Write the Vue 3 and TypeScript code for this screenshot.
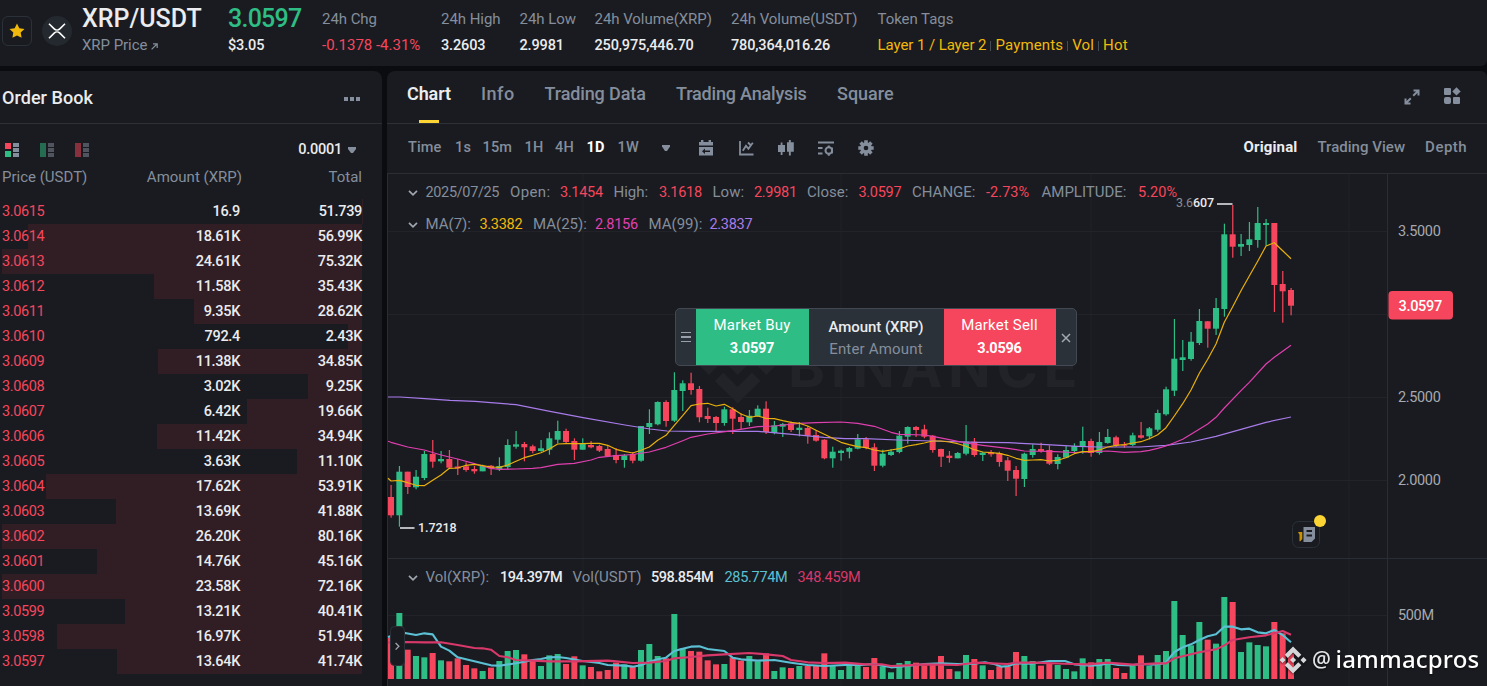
<script setup lang="ts">
interface Order { price: string; amount: string; total: string }
interface Candle { x: number; up: boolean; high: number; top: number; bottom: number; low: number }

const stats = [
  { label: '24h Chg', value: '-0.1378 -4.31%', tone: 'down' },
  { label: '24h High', value: '3.2603', tone: 'plain' },
  { label: '24h Low', value: '2.9981', tone: 'plain' },
  { label: '24h Volume(XRP)', value: '250,975,446.70', tone: 'plain' },
  { label: '24h Volume(USDT)', value: '780,364,016.26', tone: 'plain' },
]
const tags = ['Layer 1 / Layer 2', 'Payments', 'Vol', 'Hot']

const orders: Order[] = [
  ['3.0615', '16.9', '51.739'], ['3.0614', '18.61K', '56.99K'], ['3.0613', '24.61K', '75.32K'],
  ['3.0612', '11.58K', '35.43K'], ['3.0611', '9.35K', '28.62K'], ['3.0610', '792.4', '2.43K'],
  ['3.0609', '11.38K', '34.85K'], ['3.0608', '3.02K', '9.25K'], ['3.0607', '6.42K', '19.66K'],
  ['3.0606', '11.42K', '34.94K'], ['3.0605', '3.63K', '11.10K'], ['3.0604', '17.62K', '53.91K'],
  ['3.0603', '13.69K', '41.88K'], ['3.0602', '26.20K', '80.16K'], ['3.0601', '14.76K', '45.16K'],
  ['3.0600', '23.58K', '72.16K'], ['3.0599', '13.21K', '40.41K'], ['3.0598', '16.97K', '51.94K'],
  ['3.0597', '13.64K', '41.74K'],
].map(([price, amount, total]) => ({ price, amount, total }))

/** Depth bar width in percent; a full bar stands for 61.35K. */
function depth(total: string): number {
  const value = parseFloat(total) * (total.endsWith('K') ? 1 : 0.001)
  return Math.min(100, (value / 61.35) * 100)
}

const tabs = ['Chart', 'Info', 'Trading Data', 'Trading Analysis', 'Square']
const intervals = ['Time', '1s', '15m', '1H', '4H', '1D', '1W']

const quote = [
  ['Open:', '3.1454'], ['High:', '3.1618'], ['Low:', '2.9981'], ['Close:', '3.0597'],
  ['CHANGE:', '-2.73%'], ['AMPLITUDE:', '5.20%'],
]

const STEP = 25 / 3
const FIRST = 391
const at = (i: number) => FIRST + i * STEP

// One record per day: direction, then y of high, body top, body bottom and low.
const candleData = `
r485,497,515.3,517.7 g466,471.7,515.3,526.7 r471.7,471.7,487,494 g470,476.7,487.3,489.3 g451,454,478,480
r440,454,461.7,467.7 g451,459,461.3,463.3 r450,459,467.7,467.7 r459,466.5,468.5,475 r462.3,466.3,470,471.7
r466,469,471.3,473.7 g464.7,466,471.3,471.3 r465,465.7,468.3,475 g457.3,466,469,471 g439.3,445,467,469.3
g431,444.3,446.7,448.7 r442,444,447.3,461.3 r444.7,446.3,451,453.3 g440,448.3,451,451.7 g432.3,438.3,449.7,454.7
g420.7,431,439.7,443.3 r428.7,431,442,443.3 r438.3,441,449.7,460 g438.3,444,449.7,449.7 r441,445,447.3,448.3
r444.7,446,450.7,452 r446,449,456,456.7 r448,455,460,463.3 g454,455.3,460,467.7 r452,454,460.7,463.3
g426,426,460.7,461.7 g409.3,423,427,434 g401.3,402,424.3,425.3 r400.3,402,421,426.7 g372.3,390,420.7,422
g380.3,383.3,391,411 r372.7,383.3,390,394.7 r386,389,417.3,422.3 r407.7,416,419,423 r416,417,423,431.3
g406.7,409.3,423,425.7 r407.3,409.3,418.7,434 r413.3,417,422,429 g410,415.7,422.3,426 g405.3,408.7,416,416.7
r401.3,408.7,432,434 g421,425.3,433,434.3 g423,424,426.7,437 r421.3,423.3,430,432 g422,427.7,430,436.3
r426,428,435.7,443.7 r430,435,440.7,441.7 r439.3,439.7,458.3,459.3 g446.7,451.7,458.3,467.7 g449.7,450.7,453,460.7
g447,448,451.7,458.3 g434,439.3,448.7,449.3 r437,439.3,448,449.3 r443.3,447.3,465.7,471 g449.7,453.7,465.7,467.3
g449,451.7,455,456 g431,435.7,452,453.3 g426.3,427,436.7,443.7 r426,427,430,437 r424.7,429.3,436.7,438.3
r435,435.7,450,452.7 r448.7,449,456.7,467 r451,455.7,458,462.7 g452,453,458.3,458.3 g425,441.7,453.7,455.3
r438,441.7,455,456.7 g451.7,452.7,455,461 r450,452.3,454.3,456.7 r451.7,453,462,466.7 r457,460.3,470.7,481
r466,470,478.7,496 g452.7,453.7,479,487 g444.3,449,455,457.7 r442.7,449,451,452.7 r445.3,450,463.7,465
g454.3,457,464,469.3 g446,450,457.7,457.7 g443.3,446,451,453.3 g426.7,441,446.7,453.7 r438.7,441,453,456.7
g432,442,453,454.7 g429,437,443,443.7 r435.7,437.3,445.3,447 r442,444.7,445.7,447.7 g432.7,435.3,445,446
r422,435.3,437.7,438.7 g427,428.3,436.3,439.3 g409.7,413,429.7,431.7 g386.7,389.3,414.3,415.7 g319,358.7,390.7,396
g340,357.3,360,371 g332,341.7,359,360.7 g309,321,343,345 r321,321.3,328.7,347.7 g298,308,328.7,335
g223.7,234.3,309,316.7 r205,234.3,246.7,257.7 g234,244,246.7,256 g222,239.3,245,251 g207,223,240,247.7
g219,223,225,245.7 r223,223,285,312 r271,284,291.3,322.7 r288,290,305.7,315.3`

const candles: Candle[] = candleData.trim().split(/\s+/).map((record, i) => {
  const [high, top, bottom, low] = record.slice(1).split(',').map(Number)
  return { x: at(i), up: record[0] === 'g', high, top, bottom, low }
})

// Bar heights in thirds of a pixel.
const volumes = [
  125, 198, 88, 69, 65, 78, 56, 53, 62, 42, 32, 24, 34, 54, 84, 87, 74, 54, 39, 71, 75, 45, 68, 41, 36, 23, 27, 49, 44, 36,
  87, 105, 69, 62, 195, 92, 84, 82, 56, 44, 45, 65, 55, 69, 53, 77, 24, 35, 33, 39, 39, 39, 77, 42, 27, 42, 40, 36, 63, 38,
  20, 48, 54, 49, 41, 42, 69, 30, 23, 72, 60, 41, 27, 38, 38, 81, 69, 54, 40, 46, 42, 30, 23, 62, 50, 60, 60, 33, 18, 39,
  71, 39, 72, 84, 234, 132, 101, 171, 118, 106, 246, 231, 81, 110, 102, 98, 171, 137, 77,
]
const bars = volumes.map((v, i) => ({ x: at(i), h: v / 3, up: candles[i].up }))

const ma7 = [
  481, 480.3, 482.7, 485.3, 485.7, 480.3, 475, 468.3, 468, 465.3, 464.3, 465.7, 467, 467.3, 465, 461.3, 457.7, 455.3, 452.7,
  449, 444, 443.7, 443.7, 443.7, 443.3, 443.3, 445.3, 449.3, 451.3, 453, 450.3, 447, 440.3, 435.3, 425.3, 415.7, 405.7, 404,
  403.3, 406, 404.3, 408.7, 414, 417.3, 416, 418.3, 418.7, 420.7, 422.3, 423.3, 426, 430.3, 434.3, 438.3, 442.3, 444.7,
  446.7, 447.7, 450, 451.3, 450, 448.7, 446, 444.7, 443, 441, 441, 442, 443.7, 446.3, 449.7, 452, 452.7, 453.3, 455.3,
  458.3, 460.3, 460, 459.7, 461, 460.3, 457.7, 453.7, 451.7, 451.7, 450, 447, 445.3, 444.7, 443, 441.7, 438.7, 434.7,
  427.7, 416, 403.7, 390, 373.3, 359.3, 344, 322.3, 306.7, 290.7, 276, 261.3, 246, 242.7, 250.7, 258.7,
]
const ma7Points = '388,478.3 ' + ma7.map((y, i) => `${at(i).toFixed(1)},${y}`).join(' ')

// Sparse lines: index of the day and y.
const ma25: [number, number][] = [
  [0, 442.3], [2, 447], [4, 450], [6, 455], [8, 459], [10, 463.7], [12, 468.3], [13, 469.3], [15, 469], [17, 468.3],
  [18, 467.7], [20, 464.3], [22, 463.3], [24, 460], [25, 457.3], [27, 455.7], [29, 454.5], [31, 452], [33, 447.3],
  [35, 440.7], [36, 437.3], [38, 434], [41, 430.7], [44, 426.7], [46, 426], [49, 423.3], [51, 422.7], [54, 422],
  [56, 423.3], [58, 426.3], [60, 432.3], [61, 434.3], [64, 435], [65, 436.3], [67, 439.7], [69, 443], [71, 445.3],
  [74, 448.3], [76, 451], [79, 451.3], [82, 452.5], [85, 451.3], [86, 451], [88, 452.3], [90, 451.7], [91, 450.3],
  [92, 448.3], [93, 446], [94, 442.7], [95, 439.3], [96, 434.3], [98, 424], [99, 417.3], [100, 408], [102, 390.7],
  [103, 382.3], [105, 364], [106, 357.3], [108, 345.3],
]
const ma25Points = '388,441.3 ' + ma25.map(([i, y]) => `${at(i).toFixed(1)},${y}`).join(' ')

const ma99Points =
  '388,397 400,397 425,398.7 450,400.3 475,401.3 516,404.7 550,411.3 583,417.7 625,425 650,429 667,431 692,431.3 758,431.3 ' +
  '792,434.3 824,437.3 845,438.7 865,438.7 898,440 932,441 978,442.3 1008,442.7 1042,444.3 1078,446.3 1098,447 1140,447 ' +
  '1166,445.3 1191,442 1216,436.3 1241,429.3 1266,422.3 1291,417'

const volFast =
  '9,261 18,258 40,252 60,249 93,255 118,250 143,253 168,290 193,302 218,322 268,334 318,346 343,347 393,340 418,335 443,330 ' +
  '468,327 493,322 518,321 543,324 593,333 643,339 668,345 718,347 743,350 768,346 793,335 818,328 843,323 868,303 893,296 ' +
  '918,290 943,289 968,297 1018,303 1043,323 1068,328 1118,332 1168,330 1218,338 1268,345 1318,348 1380,345 1430,345 ' +
  '1468,342 1493,347 1518,352 1568,348 1618,342 1668,340 1718,342 1768,341 1800,337 1830,343 1850,350 1870,348 1893,340 ' +
  '1940,341 1993,333 2040,333 2068,343 2118,347 2150,344 2170,340 2200,345 2240,346 2268,342 2300,344 2330,341 2343,337 ' +
  '2368,306 2393,292 2418,283 2443,270 2468,259 2493,253 2518,230 2543,230 2568,238 2593,236 2618,247 2643,250 2668,240 ' +
  '2693,255 2718,277'
const volSlow =
  '9,278 60,276 118,277 168,277 218,285 268,294 293,295 318,299 343,318 368,322 393,330 443,332 493,334 568,334 668,332 ' +
  '693,334 743,339 793,338 843,333 868,325 918,321 968,316 1018,313 1093,309 1143,313 1193,318 1218,330 1268,337 1318,339 ' +
  '1380,338 1440,343 1490,343 1518,348 1568,346 1618,343 1718,345 1768,338 1868,342 1890,338 1950,338 2060,342 2110,343 ' +
  '2168,338 2243,344 2318,340 2343,340 2368,325 2393,319 2443,307 2493,298 2518,286 2543,270 2593,262 2643,256 2693,243 ' +
  '2718,254'

const gridX = [583, 841, 1091, 1349]
const gridY = [231.5, 314.5, 397.5, 480.5, 615.5]
const axis = [
  { label: '3.5000', y: 236 }, { label: '2.5000', y: 402 }, { label: '2.0000', y: 485 }, { label: '500M', y: 620 },
]

const binanceMark =
  'M16.624 13.9202l2.7175 2.7154-7.353 7.353-7.353-7.352 2.7175-2.7164 4.6355 4.6595 4.6356-4.6595zm4.6366-4.6366L24 12l-2.7154 2.7164L18.5682 12l2.6924-2.7164zm-9.272.001l2.7163 2.6914-2.7164 2.7174v-.001L9.2721 12l2.7164-2.7154zm-9.2722-.001L5.4088 12l-2.6914 2.6924L0 12l2.7164-2.7164zM11.9885.0115l7.353 7.329-2.7174 2.7154-4.6356-4.6356-4.6355 4.6595-2.7174-2.7154 7.353-7.353z'
</script>

<template>
  <div class="page">
    <header class="ticker">
      <div class="fav">
        <svg width="16" height="16" viewBox="0 0 16 16">
          <path d="M8 .6l2.3 4.7 5.2.7-3.8 3.6.9 5.2L8 12.4l-4.6 2.4.9-5.2L.5 6l5.2-.7z" fill="#f0b90b" />
        </svg>
      </div>
      <div class="coin">
        <svg width="18" height="16" viewBox="0 0 18 16" fill="none" stroke="#fff" stroke-width="1.6">
          <path d="M1 .8l5.2 5.1a4 4 0 0 0 5.6 0L17 .8M1 15.2l5.2-5.1a4 4 0 0 1 5.6 0l5.2 5.1" />
        </svg>
      </div>
      <div class="facts">
        <div class="fact">
          <h1 class="pair">XRP/USDT</h1>
          <span class="label">XRP Price
            <svg class="ext" width="7" height="7" viewBox="0 0 7 7" fill="none" stroke="#848e9c" stroke-width="1.2"><path d="M.6 6.4L6 1M2 .8h4.2V5" /></svg>
          </span>
        </div>
        <div class="fact">
          <span class="last">3.0597</span>
          <span class="value">$3.05</span>
        </div>
        <div v-for="s in stats" :key="s.label" class="fact">
          <span class="label">{{ s.label }}</span>
          <span class="value" :class="s.tone">{{ s.value }}</span>
        </div>
        <div class="fact">
          <span class="label">Token Tags</span>
          <span class="tags"><span v-for="t in tags" :key="t" class="tag">{{ t }}</span></span>
        </div>
      </div>
    </header>

    <main class="body">
      <section class="book">
        <div class="book-head">
          <h2>Order Book</h2>
          <span class="dots"><i></i><i></i><i></i></span>
        </div>
        <div class="book-tools">
          <svg width="14" height="14" viewBox="0 0 14 14">
            <path d="M0 0h6v6H0z" fill="#f6465d" /><path d="M0 8h6v6H0z" fill="#2ebd85" />
            <path d="M8 0h6v4H8zM8 5h6v4H8zM8 10h6v4H8z" fill="#848e9c" />
          </svg>
          <svg class="dim" width="14" height="14" viewBox="0 0 14 14">
            <path d="M0 0h6v14H0z" fill="#2ebd85" /><path d="M8 0h6v4H8zM8 5h6v4H8zM8 10h6v4H8z" fill="#848e9c" />
          </svg>
          <svg class="dim" width="14" height="14" viewBox="0 0 14 14">
            <path d="M0 0h6v14H0z" fill="#f6465d" /><path d="M8 0h6v4H8zM8 5h6v4H8zM8 10h6v4H8z" fill="#848e9c" />
          </svg>
          <span class="tick">0.0001</span>
          <svg width="8" height="6" viewBox="0 0 8 6"><path d="M0 0h8v2L5 6H3L0 2z" fill="#848e9c" /></svg>
        </div>
        <div class="row cols"><span>Price (USDT)</span><span>Amount (XRP)</span><span>Total</span></div>
        <div class="rows">
          <div v-for="o in orders" :key="o.price" class="row">
            <div class="depth" :style="{ width: depth(o.total) + '%' }"></div>
            <span class="price">{{ o.price }}</span><span>{{ o.amount }}</span><span>{{ o.total }}</span>
          </div>
        </div>
      </section>

      <section class="chart">
        <div class="chart-head">
          <nav class="tabs">
            <span v-for="(t, i) in tabs" :key="t" class="tab" :class="{ active: i === 0 }">{{ t }}</span>
          </nav>
          <svg class="expand" width="16" height="16" viewBox="0 0 16 16" fill="none" stroke="#848e9c" stroke-width="2">
            <path d="M9.5 1.5h5v5M14 2L9.2 6.8M6.5 14.5h-5v-5M2 14l4.8-4.8" />
          </svg>
          <svg width="16" height="16" viewBox="0 0 16 16" fill="#848e9c">
            <rect width="7" height="7" rx="1" /><rect y="9" width="7" height="7" rx="2" /><rect x="9" y="9" width="7" height="7" rx="1" />
            <path d="M12.5-.8l4.200 4.200-4.200 4.200-4.200-4.200z" />
          </svg>
        </div>

        <div class="toolbar">
          <span class="intervals">
            <span v-for="i in intervals" :key="i" :class="{ on: i === '1D' }">{{ i }}</span>
          </span>
          <svg class="caret" width="8" height="6" viewBox="0 0 8 6"><path d="M0 0h8v1.6L5 6H3L0 1.6z" fill="#848e9c" /></svg>
          <span class="icons">
            <svg width="16" height="16" viewBox="0 0 16 16" fill="#848e9c">
              <path fill-rule="evenodd" d="M3 0h2.4v2h5.2V0H13v2h2v3.4H1V2h2zM1 7h14v8.600H1zM4 11.200l3-2.700v1.900h5v1.700H7v1.800z" />
            </svg>
            <svg width="16" height="16" viewBox="0 0 16 16" fill="none" stroke="#848e9c" stroke-width="2">
              <path d="M2 1v13.500h13.500M4.800 10.800L8 5.800l2.400 3 4.400-6M10 2.500l3 3" stroke-width="1.800" />
            </svg>
            <svg width="18" height="16" viewBox="0 0 18 16" fill="#848e9c">
              <path d="M3.700 2.500h1.800V5H8v7H5.500v3H3.700v-3H1V5h2.700zM11.900 0h1.900v2.200h3v9.600h-3v3.700h-1.900v-3.700H10V2.200h1.900z" />
            </svg>
            <svg width="16" height="16" viewBox="0 0 16 16" fill="none" stroke="#848e9c" stroke-width="2">
              <path d="M0 2.500h16M0 8h4.500M0 13.500h4.500" /><circle cx="10.800" cy="10.500" r="3.300" /><path d="M10.800 5.500v2M10.800 13.800v2" /><path d="M14.200 7.500v6" stroke-width="1.400" />
            </svg>
            <svg width="16" height="16" viewBox="0 0 16 16">
              <g stroke="#848e9c" stroke-width="3.600"><path d="M8 .3v15.400M.3 8h15.400M2.600 2.600l10.800 10.800M13.400 2.600L2.600 13.400" /></g>
              <circle cx="8" cy="8" r="5.800" fill="#848e9c" /><circle cx="8" cy="8" r="2.300" fill="#1a1b20" />
            </svg>
          </span>
          <span class="views"><b>Original</b><span>Trading View</span><span>Depth</span></span>
        </div>

        <div class="plot">
          <svg class="canvas" width="1100" height="513" viewBox="387 173 1100 513">
            <path v-for="x in gridX" :key="'x' + x" :d="`M${x} 174V686`" class="grid" />
            <path v-for="y in gridY" :key="'y' + y" :d="`M388 ${y}H1387`" class="grid" />
            <path d="M387 173.500H1487M387.500 173V686M1387.500 174V686" class="frame" />
            <path d="M388 558.500H1487" class="frame" />

            <g class="brand">
              <path :d="binanceMark" transform="translate(700.600 329.500) scale(3.090)" />
              <text x="788" y="387">BINANCE</text>
            </g>

            <g v-for="(c, i) in candles" :key="'c' + i" :class="c.up ? 'up' : 'dn'">
              <rect :x="c.x - 0.5" :y="c.high" width="1.2" :height="c.low - c.high" />
              <rect :x="c.x - 3" :y="c.top" width="6" :height="c.bottom - c.top" />
            </g>
            <polyline :points="ma99Points" class="line violet" />
            <polyline :points="ma25Points" class="line pink" />
            <polyline :points="ma7Points" class="line gold" />

            <rect v-for="(b, i) in bars" :key="'v' + i" :class="b.up ? 'up' : 'dn'" :x="b.x - 3" :y="679 - b.h" width="6" :height="b.h" />
            <g transform="translate(385 550) scale(0.33333)">
              <polyline :points="volFast" class="line vol cyan" />
              <polyline :points="volSlow" class="line vol rose" />
            </g>

            <path d="M400 528H414.500M1217 204H1232.500" stroke="#eaecef" stroke-width="1.300" />
            <text x="418" y="531.500" class="mark">1.7218</text>
            <text x="1176" y="207" class="mark"><tspan class="faded">3.6</tspan>607</text>
            <text v-for="a in axis" :key="a.label" x="1398" :y="a.y" class="axis">{{ a.label }}</text>
            <rect x="1388.500" y="291" width="64.500" height="28.500" rx="4" fill="#f6465d" />
            <text x="1398.500" y="310.500" class="tagged">3.0597</text>

            <rect x="1292.500" y="521.500" width="27" height="26" rx="6" fill="#1a1b20" stroke="#2b3139" />
            <path d="M1298 532h4.300v7l-2 2.300h-.8v-6.500z" fill="#c99400" />
            <path fill-rule="evenodd" d="M1303.500 527h11.500v11.500l-3.500 3.500h-8zM1306.500 530v2h5.500v-2zM1306.500 534.500v2h5.500v-2z" fill="#848e9c" />
            <circle cx="1320" cy="521" r="6" fill="#fcd535" />

            <rect x="390.500" y="626.500" width="14" height="39" rx="4" fill="#1a1b20" stroke="#2b3139" />
            <path d="M395.600 643l3.300 3.300-3.300 3.300" fill="none" stroke="#a0a6b0" stroke-width="1.300" />

            <g class="credit">
              <path :d="binanceMark" transform="translate(1279.500 646.500) scale(1.130)" />
              <text x="1312" y="667" class="at">@</text>
              <text x="1335.500" y="667.500">iammacpros</text>
            </g>
          </svg>

          <div class="legend">
            <div class="line-ohlc">
              <svg class="chev" viewBox="0 0 10 6"><path d="M1 .8l4 4 4-4" /></svg>
              <span class="date">2025/07/25</span>
              <template v-for="[k, v] in quote" :key="k"><span>{{ k }}</span><span class="down num">{{ v }}</span></template>
            </div>
            <div class="line-ma">
              <svg class="chev" viewBox="0 0 10 6"><path d="M1 .8l4 4 4-4" /></svg>
              <span>MA(7):</span><span class="num gold-text">3.3382</span>
              <span>MA(25):</span><span class="num pink-text">2.8156</span>
              <span>MA(99):</span><span class="num violet-text">2.3837</span>
            </div>
          </div>
          <div class="legend legend-vol">
            <div class="line-vol">
              <svg class="chev" viewBox="0 0 10 6"><path d="M1 .8l4 4 4-4" /></svg>
              <span>Vol(XRP):</span><span class="strong">194.397M</span>
              <span>Vol(USDT)</span><span class="strong">598.854M</span>
              <span class="num cyan-text">285.774M</span><span class="num rose-text">348.459M</span>
            </div>
          </div>

          <div class="quick">
            <span class="grip"><i></i><i></i><i></i></span>
            <div class="side buy"><span>Market Buy</span><b>3.0597</b></div>
            <div class="side amount"><strong>Amount (XRP)</strong><span>Enter Amount</span></div>
            <div class="side sell"><span>Market Sell</span><b>3.0596</b></div>
            <svg class="close" width="10" height="10" viewBox="0 0 10 10"><path d="M1 1l8 8M9 1L1 9" stroke="#a3a9b3" stroke-width="1.500" /></svg>
          </div>
        </div>
      </section>
    </main>
  </div>
</template>

<style>
body { background: #0b0c10; }
</style>

<style scoped>
.page { width: 1487px; height: 686px; overflow: hidden; background: #0b0c10; color: #eaecef; font: 400 15px/26px Roboto, "Liberation Sans", sans-serif; }
h1, h2 { margin: 0; font-weight: 500; }

.ticker { display: flex; height: 66px; box-sizing: border-box; padding: 6px 0 0 2px; background: #1a1b20; border-radius: 0 0 6px 0; }
.fav, .coin { display: flex; align-items: center; justify-content: center; box-sizing: border-box; width: 30px; height: 30px; margin: 10px 10px 0 0; }
.fav { border: 1px solid #2b3139; border-radius: 6px; }
.coin { border-radius: 50%; background: #23292f; }
.facts { display: grid; grid-template-columns: 146px 94px 119px 78.500px 75px 136.500px 146.500px auto; }
.fact { display: flex; flex-direction: column; white-space: nowrap; }
.fact > * { height: 26px; }
.pair { font-size: 25px; line-height: 26px; }
.last { font-size: 25px; line-height: 26px; font-weight: 500; letter-spacing: -.75px; color: #2ebd85; }
.label { color: #848e9c; letter-spacing: -.05px; }
.ext { margin-left: 0; }
.value { font-size: 14.500px; font-weight: 500; letter-spacing: -.15px; line-height: 28px; }
.value.down { font-size: 15px; color: #f6465d; font-weight: 400; letter-spacing: 0; line-height: 26px; }
.tags { display: flex; align-items: center; color: #f0b90b; letter-spacing: -.08px; }
.tag + .tag { display: flex; align-items: center; letter-spacing: .15px; }
.tag + .tag::before { content: ""; width: 1px; height: 10px; margin: 2px 4px 0; background: #474d57; }

.body { display: flex; gap: 5px; margin-top: 5px; height: 615px; }
.book { width: 382px; flex: none; background: #1a1b20; border-radius: 0 8px 0 0; }
.book-head { display: flex; align-items: center; justify-content: space-between; height: 52px; padding: 0 22px 0 2px; border-bottom: 1px solid #2d3036; }
.book-head h2 { padding-top: 2px; font-size: 18px; letter-spacing: .05px; }
.dots { display: flex; gap: 2px; padding-top: 4px; }
.dots i { width: 4px; height: 4px; background: #848e9c; }
.book-tools { display: flex; align-items: center; height: 26px; padding: 13px 26px 0 5px; }
.book-tools > svg { margin-right: 21px; }
.book-tools .dim { opacity: .5; }
.book-tools .tick { margin-left: auto; padding-right: 6px; font-size: 14.500px; font-weight: 500; letter-spacing: -.25px; line-height: 24px; }
.book-tools > svg:last-child { margin: 0; }
.row { position: relative; display: grid; grid-template-columns: 118px 120px 122px; width: 360px; margin-left: 2px; height: 25px; line-height: 25px; font-size: 14.500px; font-weight: 500; text-align: right; letter-spacing: -.32px; }
.row span { position: relative; }
.row .price { text-align: left; color: #f6465d; font-weight: 400; letter-spacing: -.38px; }
.row.cols { grid-template-columns: 118px 122px 120px; height: 34px; padding-top: 2px; box-sizing: border-box; font-size: 15px; font-weight: 400; letter-spacing: 0; color: #848e9c; }
.row.cols span:first-child { text-align: left; }
.rows { padding-top: 2px; }
.depth { position: absolute; top: 0; right: 0; height: 100%; background: #311e25; }

.chart { flex: none; width: 1100px; background: #1a1b20; border-radius: 8px 6px 0 0; }
.chart-head { display: flex; height: 52px; border-bottom: 1px solid #2d3036; padding: 0 27px 0 20px; }
.chart-head > svg { margin: 16.500px 0 0 24px; overflow: visible; }
.chart-head > .expand { margin: 18px 0 0 auto; }
.tabs { display: grid; grid-template-columns: 74px 63.500px 131.500px 161px auto; color: #848e9c; font-size: 18px; font-weight: 500; line-height: 45px; letter-spacing: -.12px; white-space: nowrap; }
.tab.active { position: relative; color: #eaecef; font-weight: 600; letter-spacing: -.1px; }
.tab:nth-child(2) { letter-spacing: .5px; }
.tab:nth-child(4) { letter-spacing: -.18px; }
.tab:nth-child(5) { letter-spacing: 0; }
.tab.active::after { content: ""; position: absolute; left: 12px; bottom: 0; width: 20px; height: 3px; background: #fcd535; }
.toolbar { display: flex; align-items: center; height: 49px; padding: 0 20px 0 21px; color: #848e9c; font-weight: 500; }
.intervals { display: grid; grid-template-columns: 47px 27.500px 42px 30.500px 31.500px 31px 44px; padding-top: 2px; line-height: 46px; font-size: 14.500px; letter-spacing: .15px; }
.toolbar > * { margin-bottom: 3px; }
.intervals .on { color: #fff; font-weight: 700; }
.toolbar .caret { margin-top: 1px; }
.icons { display: flex; align-items: center; gap: 24px; margin-left: 28px; }
.icons svg { margin: 1px 0 0; }
.icons svg:nth-child(3) { margin: 1px -1px 0; }
.views { display: flex; gap: 20px; margin-left: auto; letter-spacing: .03px; line-height: 46px; }
.views b { color: #eaecef; letter-spacing: .15px; }
.views span:last-child { letter-spacing: .5px; margin-right: -.2px; }

.plot { position: relative; height: 513px; }
.canvas { display: block; }
.grid { stroke: #212328; fill: none; }
.frame { stroke: #2a2e34; fill: none; }
.brand { fill: #222329; font: 700 56px Inter, sans-serif; letter-spacing: 5.700px; }
.up { fill: #2ebd85; }
.dn { fill: #f6465d; }
.line { fill: none; stroke-width: 1.200; stroke-linejoin: round; }
.line.vol { stroke-width: 6.300; }
.violet { stroke: #a77bea; }
.pink { stroke: #e03fb0; }
.gold { stroke: #e8b00c; }
.cyan { stroke: #5bc0d4; }
.rose { stroke: #d9386a; }
.mark { fill: #eaecef; font: 500 12.500px Roboto, sans-serif; letter-spacing: -.1px; }
.mark .faded { fill: #8a8d93; font-weight: 400; }
.axis { fill: #a6a9af; font: 400 14.500px Roboto, sans-serif; letter-spacing: -.35px; }
.tagged { fill: #fff; font: 500 14.500px Roboto, sans-serif; letter-spacing: -.3px; }
.credit { fill: #fff; font: 500 24px "Noto Sans", sans-serif; letter-spacing: .18px; filter: drop-shadow(0 1px 1px rgba(0, 0, 0, .6)); }
.credit path { fill: #d6d7d9; }
.credit .at { font-size: 21px; fill: #e3e4e6; }

.legend { position: absolute; left: 21px; top: 2px; color: #848e9c; letter-spacing: 0; line-height: 32px; }
.legend-vol { top: 387px; }
.legend > div { display: grid; align-items: center; height: 32px; white-space: nowrap; }
.line-ohlc { grid-template-columns: 17.500px 84.500px 50px 53.500px 45.500px 53.500px 41.500px 53px 51.500px 53.500px 74px 55.500px 96.500px auto; }
.legend .date { padding-top: 2px; font-size: 14.500px; letter-spacing: -.35px; }
.line-ohlc span:nth-child(3) { letter-spacing: .35px; }
.line-ma { grid-template-columns: 17.500px 54px 53.500px 62px 53.500px 61px auto; }
.line-vol { grid-template-columns: 17.500px 74.500px 72.500px 78.500px 73.500px 73px auto; }
.chev { width: 10px; height: 6px; margin-top: 2px; fill: none; stroke: #a0a6b0; stroke-width: 1.700; }
.num { padding-top: 2px; font-size: 14.500px; letter-spacing: -.3px; }
.line-ohlc .num:nth-last-child(-n + 3) { letter-spacing: .05px; }
.strong { padding-top: 2px; color: #eaecef; font-size: 14.500px; font-weight: 500; letter-spacing: -.5px; }
.down { color: #f6465d; }
.gold-text { color: #f0b90b; }
.pink-text { color: #e040b0; }
.violet-text { color: #a77bea; }
.cyan-text { color: #5bc0d4; }
.rose-text { color: #d9386a; }

.quick { position: absolute; left: 287.500px; top: 135px; display: flex; align-items: stretch; box-sizing: border-box; width: 402px; height: 58px; border: 1px solid #434952; border-radius: 5px; background: #2b3139; }
.grip { display: flex; flex-direction: column; justify-content: center; gap: 3px; width: 20px; align-items: center; }
.grip i { width: 10px; height: 1.500px; background: #98a0ab; }
.side { display: flex; flex-direction: column; align-items: center; justify-content: center; line-height: 23px; letter-spacing: .18px; }
.side b { font-size: 14.500px; letter-spacing: -.25px; }
.buy { width: 113px; background: #2ebd85; color: #fff; }
.sell { width: 112px; background: #f6465d; color: #fff; }
.amount { flex: 1; color: #848e9c; line-height: 22px; padding-top: 2px; }
.amount strong { color: #eaecef; font-weight: 500; letter-spacing: -.05px; }
.close { align-self: center; margin: 1px 5px 0; }
</style>
